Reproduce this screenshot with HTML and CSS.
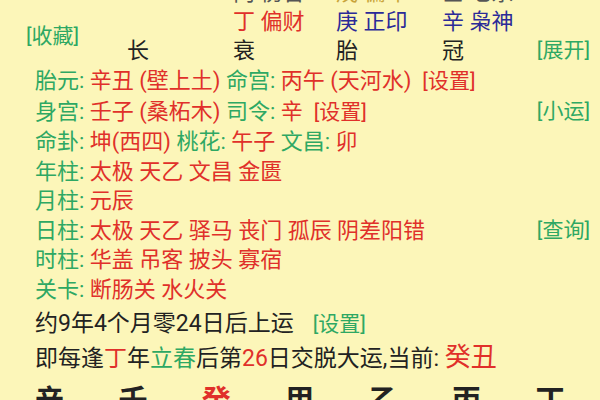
FILE: index.html
```html
<!DOCTYPE html>
<html lang="zh">
<head>
    <meta charset="UTF-8">
    <meta name="viewport" content="width=device-width, initial-scale=1.0">
    <title>排盘</title>

    <link rel="stylesheet" href="styles.css">
</head>
<body>
    <div class="pillars">
        <span class="cell c1 r1 gray">丙 伤官</span>
        <span class="cell c2 r1 earth">戊 偏印</span>
        <span class="cell c3 r1 gray">壬 七杀</span>

        <a href="#fav" class="link fav">[收藏]</a>

        <span class="cell c1 r2 red">丁 偏财</span>
        <span class="cell c2 r2 blue">庚 正印</span>
        <span class="cell c3 r2 blue">辛 枭神</span>

        <span class="cell c0 r3">长</span>
        <span class="cell c1 r3">衰</span>
        <span class="cell c2 r3">胎</span>
        <span class="cell c3 r3">冠</span>
        <a href="#more" class="link more">[展开]</a>
    </div>

    <div class="info">
        <div class="row">
            <span><b class="lbl">胎元:</b> <i class="val">辛丑 (壁上土)</i> <b class="lbl">命宫:</b> <i class="val">丙午 (天河水)</i>&nbsp; <a href="#set" class="set">[设置]</a></span>
        </div>
        <div class="row">
            <span><b class="lbl">身宫:</b> <i class="val">壬子 (桑柘木)</i> <b class="lbl">司令:</b> <i class="val">辛</i>&nbsp; <a href="#set" class="set">[设置]</a></span>
            <a href="#xy" class="link">[小运]</a>
        </div>
        <div class="row">
            <span><b class="lbl">命卦:</b> <i class="val">坤(西四)</i> <b class="lbl">桃花:</b> <i class="val">午子</i> <b class="lbl">文昌:</b> <i class="val">卯</i></span>
        </div>
        <div class="row">
            <span><b class="lbl">年柱:</b> <i class="val">太极 天乙 文昌 金匮</i></span>
        </div>
        <div class="row">
            <span><b class="lbl">月柱:</b> <i class="val">元辰</i></span>
        </div>
        <div class="row">
            <span><b class="lbl">日柱:</b> <i class="val">太极 天乙 驿马 丧门 孤辰 阴差阳错</i></span>
            <a href="#q" class="link">[查询]</a>
        </div>
        <div class="row">
            <span><b class="lbl">时柱:</b> <i class="val">华盖 吊客 披头 寡宿</i></span>
        </div>
        <div class="row">
            <span><b class="lbl">关卡:</b> <i class="val">断肠关 水火关</i></span>
        </div>
    </div>

    <div class="luck">
        <div class="start">约9年4个月零24日后上运<a href="#set" class="link small">[设置]</a></div>
        <div class="every">即每逢<span class="red">丁</span>年<span class="green">立春</span>后第<span class="red">26</span>日交脱大运,当前: <span class="now">癸丑</span></div>
        <div class="dayun">
            <span>辛亥</span>
            <span>壬子</span>
            <span class="red">癸丑</span>
            <span>甲寅</span>
            <span>乙卯</span>
            <span>丙辰</span>
            <span>丁巳</span>
        </div>
    </div>
</body>
</html>
```

FILE: styles.css
```css
html, body{
    margin: 0;
    height: 100%;
    overflow: hidden;
}
body{
    background-color: #fcf6b9;
    font-family: Roboto, "Noto Sans CJK SC", sans-serif;
    font-size: 22px;
    color: #222;
}
a{
    text-decoration: none;
}
b, i{
    font-weight: normal;
    font-style: normal;
}

.red{ color: #e0302a; }
.blue{ color: #2b2a98; }
.green{ color: #2ea863; }
.gray{ color: #555; }
.earth{ color: #c9a43a; }

/* top grid */
.pillars{
    display: grid;
    grid-template-columns: 101px 106px 103px 106px 1fr;
    grid-template-rows: 32px 29px 29px;
    line-height: 29px;
    margin-top: -25px;
    padding: 0 10px 0 26px;
}
.cell.c0{ grid-column: 2; }
.cell.c1{ grid-column: 3; }
.cell.c2{ grid-column: 4; }
.cell.c3{ grid-column: 5; }
.cell.r1{ grid-row: 1; align-self: start; margin-top: 3px; }
.cell.r2{ grid-row: 2; }
.cell.r3{ grid-row: 3; }

.link{
    color: #2ea863;
    font-size: 21px;
}
.link.fav{
    grid-column: 1;
    grid-row: 2 / span 2;
    align-self: center;
}
.link.more{
    grid-column: 5;
    grid-row: 3;
    justify-self: end;
}

/* info rows */
.info{
    margin-top: 1px;
    padding: 0 10px 0 35px;
}
.row{
    display: flex;
    justify-content: space-between;
    line-height: 29.5px;
    white-space: nowrap;
}
.lbl{ color: #2ea863; }
.val{ color: #e0302a; }
.set{
    color: #e0302a;
    font-size: 21px;
}

/* luck */
.luck{
    padding: 0 10px 0 35px;
    font-size: 23px;
}
.start{
    margin-top: 5px;
    line-height: 30px;
}
.link.small{
    margin-left: 19px;
}
.every{
    line-height: 36px;
}
.now{
    color: #e0302a;
    font-size: 26px;
}
.dayun{
    display: flex;
    gap: 29px;
    font-size: 29px;
    font-weight: bold;
    line-height: 48px;
}
```
